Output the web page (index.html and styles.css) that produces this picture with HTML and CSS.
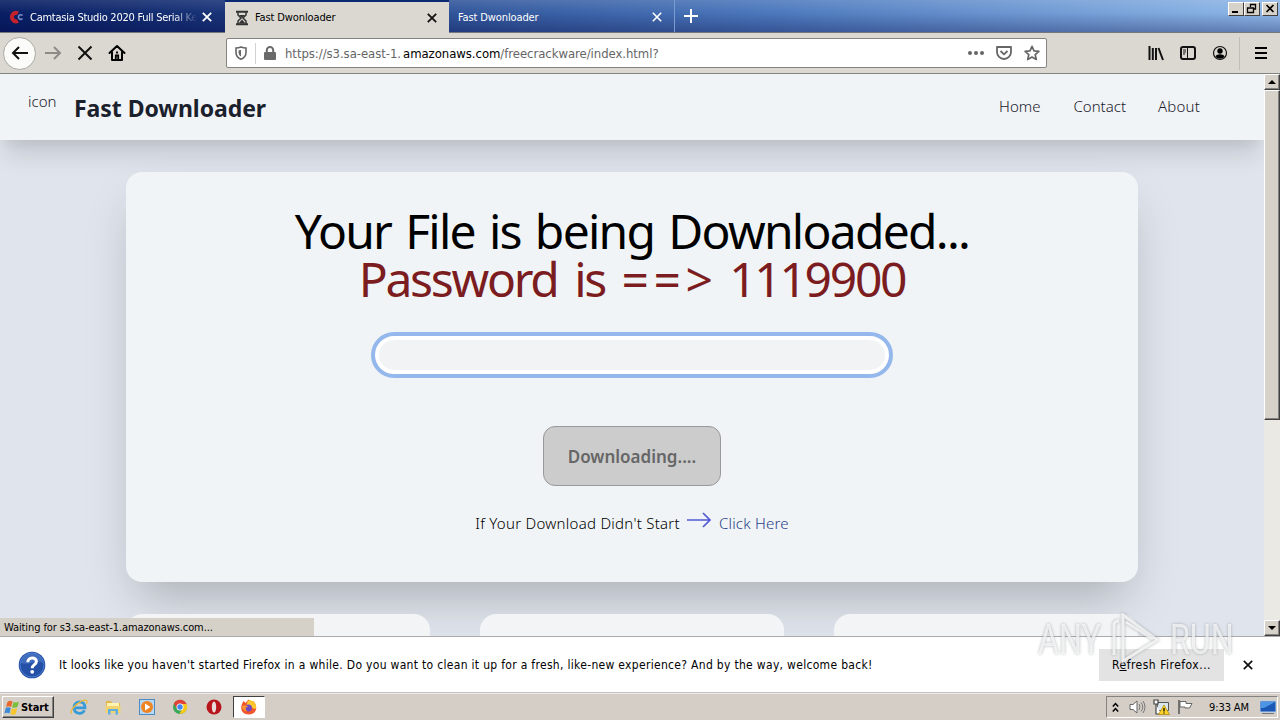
FILE: index.html
```
<!DOCTYPE html>
<html lang="en">
<head>
  <meta charset="UTF-8">
  <meta name="viewport" content="width=device-width, initial-scale=1.0">
  <title>Fast Dwonloader</title>
  <link rel="stylesheet" href="styles.css">
</head>
<body>

<div class="tabs">
  <div class="tab tab-first">
    <svg width="16" height="16" viewBox="0 0 16 16"><path d="M9 4.2A4.3 4.3 0 1 0 9 12" fill="none" stroke="#c4222b" stroke-width="4"/><path d="M13.5 6.6a2.3 2.3 0 1 0 0 3" fill="none" stroke="#7288c8" stroke-width="1.6"/></svg>
    <span class="tab-title fade">Camtasia Studio 2020 Full Serial Ke</span>
    <svg class="x" width="10" height="10" viewBox="0 0 10 10"><path d="M.8.8l8.4 8.4M9.2.8L.8 9.2" stroke="#fff" stroke-width="1.8"/></svg>
  </div>
  <div class="tab active">
    <svg width="16" height="16" viewBox="0 0 16 16"><path d="M2 1.8h12M2 14.2h12" stroke="#333" stroke-width="2"/><path d="M4 2v3l3 3-3 3v3M12 2v3L9 8l3 3v3" fill="none" stroke="#333" stroke-width="1.5"/><path d="M5 5h6L8 8zM4.5 13.5L8 9.5l3.5 4z" fill="#333"/></svg>
    <span class="tab-title">Fast Dwonloader</span>
    <svg class="x" width="10" height="10" viewBox="0 0 10 10"><path d="M.8.8l8.4 8.4M9.2.8L.8 9.2" stroke="#111" stroke-width="1.8"/></svg>
  </div>
  <div class="tab tab-last">
    <span class="tab-title">Fast Dwonloader</span>
    <svg class="x" width="10" height="10" viewBox="0 0 10 10"><path d="M.8.8l8.4 8.4M9.2.8L.8 9.2" stroke="#fff" stroke-width="1.6"/></svg>
  </div>
  <svg class="plus" width="14" height="14" viewBox="0 0 14 14"><path d="M7 0v14M0 7h14" stroke="#fff" stroke-width="2"/></svg>
  <div class="window-buttons">
    <span class="wb"><svg width="14" height="11" viewBox="0 0 14 11"><path d="M3 9h6" stroke="#000" stroke-width="2"/></svg></span>
    <span class="wb"><svg width="14" height="11" viewBox="0 0 14 11"><path d="M5.5 4V1.5h5v4.5H9M5 1.5h6M2.5 5h6v4.5h-6zM2 5h7" fill="none" stroke="#000" stroke-width="1.3"/></svg></span>
    <span class="wb close"><svg width="14" height="11" viewBox="0 0 14 11"><path d="M3.5 2l7 7M10.5 2l-7 7" stroke="#000" stroke-width="1.7"/></svg></span>
  </div>
</div>

<div class="toolbar">
  <div class="nav-buttons">
    <span class="back"><svg width="18" height="18" viewBox="0 0 18 18"><path d="M17 9H2M8 3L2 9l6 6" fill="none" stroke="#111" stroke-width="2"/></svg></span>
    <svg width="18" height="18" viewBox="0 0 18 18"><path d="M1 9h15M10 3l6 6-6 6" fill="none" stroke="#8d8b87" stroke-width="2"/></svg>
    <svg width="16" height="16" viewBox="0 0 16 16"><path d="M1.5 1.5l13 13M14.5 1.5l-13 13" stroke="#111" stroke-width="2"/></svg>
    <svg width="18" height="18" viewBox="0 0 18 18"><path d="M1.5 9L9 2l7.5 7M4 8v8h10V8" fill="none" stroke="#000" stroke-width="2" stroke-linejoin="round" stroke-linecap="round"/><path d="M7.8 16v-4.5h2.4V16M8 8.5h2" fill="none" stroke="#000" stroke-width="1.8"/></svg>
  </div>
  <div class="urlbar">
    <svg width="14" height="14" viewBox="0 0 14 14"><path d="M7 1c-2 .8-3.5 1-5 1v4.5C2 9.5 4 12 7 13.2c3-1.2 5-3.7 5-6.700V2c-1.500 0-3-.2-5-1z" fill="none" stroke="#666" stroke-width="1.6"/><path d="M7 4v6.500C5.200 9.500 4.600 8 4.600 6.500V4.300z" fill="#666"/></svg>
    <span class="url-divider"></span>
    <svg class="lock" width="14" height="14" viewBox="0 0 14 14"><path d="M3.800 7V4.200a3.200 3.200 0 0 1 6.400 0V7" fill="none" stroke="#6a6a6a" stroke-width="2"/><rect x="1" y="6" width="12" height="8" rx="1" fill="#6a6a6a"/></svg>
    <span class="url">https://s3.sa-east-1.<b>amazonaws.com</b>/freecrackware/index.html?</span>
    <svg width="16" height="16" viewBox="0 0 16 16" fill="#666"><circle cx="2" cy="8" r="2"/><circle cx="8" cy="8" r="2"/><circle cx="14" cy="8" r="2"/></svg>
    <svg width="16" height="16" viewBox="0 0 16 16"><path d="M1 2h14v5a7 7 0 0 1-14 0z" fill="none" stroke="#666" stroke-width="1.8" stroke-linejoin="round"/><path d="M4.500 6L8 9.300 11.500 6" fill="none" stroke="#666" stroke-width="1.8"/></svg>
    <svg width="16" height="16" viewBox="0 0 16 16"><path d="M8 1.300l2 4.500 4.900.5-3.700 3.300 1.100 4.900L8 12l-4.300 2.500 1.100-4.900L1.100 6.300 6 5.800z" fill="none" stroke="#666" stroke-width="1.7" stroke-linejoin="round"/></svg>
  </div>
  <div class="tools">
    <svg width="16" height="16" viewBox="0 0 16 16"><path d="M1.500 1v14M4.800 3v12M8 3v12M10.500 3l4.500 12" stroke="#111" stroke-width="2"/></svg>
    <svg width="16" height="16" viewBox="0 0 16 16"><rect x="1" y="2" width="14" height="12" rx="2" fill="none" stroke="#111" stroke-width="2"/><path d="M7.500 2v12M3 5h3M3 7h3M3 9h2" stroke="#111"/></svg>
    <svg width="16" height="16" viewBox="0 0 16 16"><circle cx="8" cy="8" r="6.500" fill="none" stroke="#111" stroke-width="1.2"/><circle cx="8" cy="6" r="2.700"/><path d="M3.500 11.500c1-3 8-3 9 0-2 3-7 3-9 0z"/></svg>
    <span class="divider"></span>
    <svg width="12" height="14" viewBox="0 0 12 14"><path d="M0 2h12M0 7h12M0 12h12" stroke="#000" stroke-width="2"/></svg>
  </div>
</div>

<div class="viewport">
  <div class="page">
    <header>
      <span class="logo">icon</span>
      <h2>Fast Downloader</h2>
      <nav>
        <a class="home">Home</a>
        <a class="contact">Contact</a>
        <a class="about">About</a>
      </nav>
    </header>
    <main class="card">
      <h1>Your File is being Downloaded...</h1>
      <h1 class="password">Password is <span class="arrow">==&gt;</span> 1119900</h1>
      <div class="progress"></div>
      <button disabled>Downloading....</button>
      <p><span class="start-text">If Your Download Didn't Start</span>
        <svg width="25" height="16" viewBox="0 0 25 16"><path d="M0 8h23M16 1l7 7-7 7" fill="none" stroke="#5059d8" stroke-width="1.7"/></svg>
        <a class="click">Click Here</a></p>
    </main>
    <div class="boxes">
      <div></div>
      <div></div>
      <div></div>
    </div>
    <div class="status">Waiting for s3.sa-east-1.amazonaws.com...</div>
  </div>
  <div class="scrollbar">
    <span class="sb-btn"><svg width="8" height="4"><path d="M4 0l4 4H0z"/></svg></span>
    <span class="thumb"></span>
    <span class="sb-btn bottom"><svg width="8" height="4"><path d="M0 0h8L4 4z"/></svg></span>
  </div>
</div>

<div class="notice">
  <svg width="28" height="28" viewBox="0 0 28 28"><circle cx="14" cy="14" r="13.300" fill="#2450a8"/><circle cx="14" cy="14" r="12" fill="none" stroke="#4d7bd0"/><path d="M3 12a11 10 0 0 1 22 0c-5-4-15 3-22 0z" fill="#5c88d4" opacity=".5"/><path d="M9.800 11.200c0-5.600 8.600-5.600 8.600-.7 0 3.200-4.200 3.200-4.200 6.700" fill="none" stroke="#fff" stroke-width="3"/><circle cx="14.200" cy="20.800" r="1.900" fill="#fff"/></svg>
  <span class="message">It looks like you haven't started Firefox in a while. Do you want to clean it up for a fresh, like-new experience? And by the way, welcome back!</span>
  <span class="refresh"><span>R<u>e</u>fresh Firefox...</span></span>
  <svg width="10" height="10" viewBox="0 0 10 10"><path d="M.8.8l8.400 8.400M9.200.8L.8 9.200" stroke="#111" stroke-width="1.7"/></svg>
</div>

<div class="taskbar">
  <div class="start">
    <svg width="18" height="17" viewBox="0 0 17 17"><path d="M4 3q2.500-2 5-.5L7.600 8Q5 6.500 2.500 8z" fill="#e8682c"/><path d="M10 3q2.500 1 5.500-.5L14 8q-3 1.500-5.400.2z" fill="#7bbf3c"/><path d="M2.200 9q2.500-1.500 5 0L6 14.500q-2.500-1.700-5 0z" fill="#3c8ad8"/><path d="M8.300 9.300q2.500 1.400 5.400 0L12.300 15q-3 1.400-5.400 0z" fill="#f5c52c"/></svg>
    <b>Start</b>
  </div>
  <div class="apps">
    <svg width="18" height="18" viewBox="0 0 18 18"><path d="M4.500 9.800H15c.3-8-11-8-11 0 0 6.500 8 7 10.500 2.500" fill="none" stroke="#359bd9" stroke-width="2.7"/><path d="M1.500 15.500C-1 11 13 0 16.500 2.500c1 .8.500 2-.3 3.200" fill="none" stroke="#e9b93b" stroke-width="1.3"/></svg>
    <svg width="18" height="18" viewBox="0 0 18 18"><path d="M2 3h5l1 2h8v9H2z" fill="#e0b64c"/><path d="M3 5h12v5H3z" fill="#fff3b0"/><path d="M1.500 8h15v7h-15z" fill="#f1d36f"/><path d="M4 16.500V11h10v5.500h-2.500V13h-5v3.500z" fill="#5eaee0"/></svg>
    <svg width="18" height="18" viewBox="0 0 18 18"><rect x="1.500" y="1.500" width="15" height="15" fill="#b8d7f2" stroke="#4b8ac5"/><circle cx="9" cy="9" r="6" fill="#ee8422"/><path d="M7 5.500L12.500 9 7 12.500z" fill="#fff"/></svg>
    <svg width="18" height="18" viewBox="0 0 18 18"><circle cx="9" cy="9" r="7" fill="#3aa757"/><path d="M2.900 5.500A7 7 0 0 1 15.500 6H9L6 11z" fill="#e04335"/><path d="M15.500 6A7 7 0 0 1 8.500 16l3.500-7-3-3z" fill="#f8c91c"/><circle cx="9" cy="9" r="3.500" fill="#fff"/><circle cx="9" cy="9" r="2.700" fill="#4285f4"/></svg>
    <svg width="18" height="18" viewBox="0 0 18 18"><circle cx="9" cy="9" r="7.500" fill="#b8141c"/><ellipse cx="9" cy="9" rx="2.200" ry="5.600" fill="#e8ddd8"/></svg>
    <span class="current"><svg width="18" height="18" viewBox="0 0 18 18"><path d="M3.500 3l2 2 3-3.500 3 2.500 1.500-1C18 7 17.500 16.500 9 16.500S-.5 9 3.500 3z" fill="#f0562a"/><path d="M9 2c4 0 8 4 7 8-2 3-4-2-7-2s-3-3 0-6z" fill="#ffc72e"/><circle cx="8.500" cy="10" r="3.400" fill="#6e4bc4"/><path d="M2 8c3-2 6 0 6 1-3 0-3 2-1 4-3 0-5-2-5-5z" fill="#fa9431"/></svg></span>
  </div>
  <div class="tray">
    <svg width="7" height="11" viewBox="0 0 7 11"><path d="M.8 4.500l2.700-3 2.700 3M.8 9.500l2.700-3 2.700 3" fill="none" stroke="#000" stroke-width="1.5"/></svg>
    <svg class="speaker" width="17" height="16" viewBox="0 0 17 16"><path d="M1 5.500h3L8 2v12l-4-3.500H1z" fill="#fff" stroke="#666"/><path d="M10 5q2 3 0 6M12 3.500q3.500 4.500 0 9M14 2q4 6 0 12" fill="none" stroke="#777"/></svg>
    <svg class="network" width="17" height="16" viewBox="0 0 17 16"><path d="M4.500 3.500h11v8h-11z" fill="#d9e6ee" stroke="#555"/><path d="M1 1h4v4H1zM3 5v10h5" fill="#fff" stroke="#444" stroke-width="1.2"/><path d="M11 6l5.500 9.500h-11z" fill="#ffd42a" stroke="#a98500" stroke-width=".7"/><path d="M11 9v3.500M11 13.500v1" stroke="#000" stroke-width="1.3"/></svg>
    <svg class="flag" width="16" height="16" viewBox="0 0 16 16"><path d="M2 1v14" stroke="#555" stroke-width="1.5"/><path d="M3 2.500h6v2h6L12.500 9H8V8H3z" fill="#fff" stroke="#666"/></svg>
    <span class="time">9:33 AM</span>
    <svg class="desktop" width="16" height="16" viewBox="0 0 16 16"><rect x="0" y="2" width="16" height="11" fill="#1b57b4" stroke="#b5d0ec"/><path d="M1 3h14L4 9H1z" fill="#4c94e4"/><path d="M2 14.500h12" stroke="#777"/></svg>
  </div>
</div>

<div class="watermark">
  <span>ANY</span>
  <svg width="52" height="52" viewBox="0 0 52 52"><path d="M4 42V12q0-4 5-4M13 2v46l34-21z" fill="none" stroke="#fff" stroke-width="3"/><path d="M16 9l27 17" stroke="#fff" stroke-width="3"/></svg>
  <span>RUN</span>
</div>

</body>
</html>
```
FILE: styles.css
```
* {
  box-sizing: border-box;
}
body {
  margin: 0;
  width: 1280px;
  height: 720px;
  overflow: hidden;
  display: flex;
  flex-direction: column;
  position: relative;
  font-family: "DejaVu Sans Condensed", "DejaVu Sans", sans-serif;
  font-size: 11px;
  color: #000;
}
svg {
  display: block;
  flex: none;
}

/* tab strip */
.tabs {
  height: 33px;
  flex: none;
  display: flex;
  background: linear-gradient(rgba(255,255,255,.12), rgba(255,255,255,0) 40%, rgba(0,0,60,.3)), linear-gradient(90deg, #0a246a, #4c78bc 60%, #8fb8e8);
  border-bottom: 1px solid #74777c;
}
.tab {
  width: 225px;
  height: 32px;
  display: flex;
  align-items: center;
  color: #fff;
  padding: 2px 13px 0 9px;
}
.tab-title {
  flex: 1;
  margin-left: 5px;
  white-space: nowrap;
  overflow: hidden;
  letter-spacing: -0.12px;
}
.tab-first {
  background: rgba(0,0,60,.12);
}
.tab-first .tab-title {
  margin-right: 5px;
  letter-spacing: -0.25px;
}
.fade {
  -webkit-mask-image: linear-gradient(90deg, #000 86%, transparent);
  mask-image: linear-gradient(90deg, #000 86%, transparent);
}
.active {
  width: 224px;
  height: 33px;
  border-top: 2px solid #0b2a74;
  background: #dbd8d1;
  color: #000;
  padding-top: 0;
  padding-right: 12px;
}
.tab-last {
  width: 226px;
  border-right: 1px solid #7c9bd0;
  padding-left: 4px;
  padding-right: 12px;
}
.plus {
  margin: 9px 0 0 9px;
}
.window-buttons {
  margin-left: auto;
  display: flex;
  padding: 2px 2px 0 0;
}
.wb {
  width: 16px;
  height: 14px;
  background: #d6d2c9;
  border: 1px solid;
  border-color: #fff #404040 #404040 #fff;
}
.close {
  margin-left: 2px;
}

/* toolbar */
.toolbar {
  height: 41px;
  flex: none;
  background: #dbd8d1;
  border-bottom: 1px solid #85837f;
  display: flex;
  align-items: center;
}
.nav-buttons {
  width: 226px;
  display: flex;
  align-items: center;
  gap: 15px;
  padding-left: 3px;
}
.back {
  width: 33px;
  height: 33px;
  margin-right: -7px;
  border-radius: 50%;
  border: 1px solid #aaa8a2;
  background: #fbfbf9;
  display: flex;
  align-items: center;
  justify-content: center;
}
.urlbar {
  width: 821px;
  height: 30px;
  background: #fff;
  border: 1px solid #85837f;
  border-radius: 2px;
  display: flex;
  align-items: center;
  padding: 0 6px 0 7px;
  gap: 12px;
}
.url-divider {
  width: 1px;
  height: 21px;
  margin: 0 -5px 0 -5px;
  background: #d2d2d2;
}
.lock {
  margin-right: -4px;
}
.url {
  flex: 1;
  color: #666;
  font-size: 13px;
  letter-spacing: -0.05px;
}
.url b {
  font-weight: normal;
  color: #000;
  margin-left: 2px;
}
.tools {
  margin-left: auto;
  display: flex;
  align-items: center;
  gap: 16px;
  padding-right: 13px;
}
.divider {
  width: 1px;
  height: 33px;
  background: #c1beb7;
  margin: 0 -1px 0 -5px;
}

/* web page */
.viewport {
  height: 562px;
  flex: none;
  display: flex;
}
.page {
  width: 1264px;
  position: relative;
  overflow: hidden;
  background: #e0e5ed;
  font-family: "Noto Sans", sans-serif;
  font-weight: 300;
}
header {
  height: 66px;
  background: #f1f4f6;
  box-shadow: 0 20px 25px -5px rgba(0,0,0,.12), 0 10px 10px -5px rgba(0,0,0,.05);
  display: flex;
  color: #1a202c;
}
.logo {
  font-size: 15px;
  margin: 16px 0 0 28px;
  line-height: 22px;
  width: 46px;
}
h2 {
  margin: 18px 0 0;
  font-size: 23px;
  line-height: 32px;
  font-weight: 700;
  letter-spacing: -0.05px;
}
nav {
  margin: 21px 64px 0 auto;
  display: flex;
  font-size: 15px;
  line-height: 22px;
}
.home {
  margin-right: 33px;
}
.contact {
  margin-right: 32px;
}
.about {
  letter-spacing: 0.2px;
}
.card {
  width: 1012px;
  height: 410px;
  margin: 32px auto;
  padding-top: 35px;
  background: #f1f4f6;
  border-radius: 16px;
  box-shadow: 0 25px 50px -12px rgba(0,0,0,.25);
  display: flex;
  flex-direction: column;
  align-items: center;
}
h1 {
  margin: 0;
  font-size: 48px;
  line-height: 48px;
  font-weight: 400;
  letter-spacing: -1.75px;
  word-spacing: 3.3px;
  white-space: nowrap;
}
.password {
  color: #7b1c20;
  letter-spacing: -2.3px;
  word-spacing: 6.5px;
}
.arrow {
  letter-spacing: 4.5px;
  margin-right: -5px;
}
.progress {
  width: 522px;
  height: 46px;
  margin-top: 29px;
  border: 4px solid #95b8ec;
  border-radius: 23px;
  background: #f2f3f4;
  box-shadow: inset 0 0 0 4px #fff;
}
button {
  width: 178px;
  height: 60px;
  margin-top: 48px;
  border: 1px solid #999;
  border-radius: 12px;
  background: #ccc;
  color: #666;
  font: 600 17px "Noto Sans", sans-serif;
  white-space: nowrap;
}
p {
  margin: 25px 0 0;
  display: flex;
  font-size: 15px;
  line-height: 24px;
}
p svg {
  margin: 1px 7px 0;
}
.start-text {
  letter-spacing: 0.27px;
}
.click {
  color: #2b3f88;
  letter-spacing: 0.2px;
}
.boxes {
  width: 1012px;
  margin: 0 auto;
  display: grid;
  grid-template-columns: repeat(3, 304px);
  gap: 50px;
}
.boxes div {
  height: 60px;
  border-radius: 16px;
  background: #f2f4f5;
}
.status {
  position: absolute;
  left: 0;
  bottom: 0;
  width: 314px;
  height: 18px;
  padding-left: 4px;
  background: #d5d1c8;
  font: 400 11px/20px "DejaVu Sans Condensed", "DejaVu Sans", sans-serif;
  letter-spacing: -0.1px;
}
.scrollbar {
  width: 16px;
  display: flex;
  flex-direction: column;
  background: #ebe9e4;
}
.sb-btn {
  height: 16px;
  display: flex;
  align-items: center;
  justify-content: center;
}
.sb-btn, .thumb {
  background: #d6d2c9;
  border: 1px solid;
  border-color: #fff #404040 #404040 #fff;
  box-shadow: inset -1px -1px #85837f;
}
.thumb {
  height: 330px;
}
.bottom {
  margin-top: auto;
}

/* notification bar */
.notice {
  height: 57px;
  flex: none;
  display: flex;
  align-items: center;
  background: #fff;
  border-top: 1px solid #aaa;
  border-bottom: 1px solid #c5c2bd;
  padding: 0 27px 0 18px;
  font-size: 12px;
}
.message {
  margin-left: 13px;
  white-space: nowrap;
  letter-spacing: 0.31px;
}
.refresh {
  width: 125px;
  height: 32px;
  margin: 0 19px 0 auto;
  background: #e3e3e3;
  display: flex;
  align-items: center;
  justify-content: center;
  letter-spacing: 0.5px;
}

/* taskbar */
.taskbar {
  height: 27px;
  flex: none;
  display: flex;
  align-items: center;
  background: #d5cec6;
  border-top: 1px solid #eee;
}
.start {
  width: 52px;
  height: 22px;
  margin-left: 2px;
  display: flex;
  align-items: center;
  border: 1px solid;
  border-color: #fff #404040 #404040 #fff;
  box-shadow: inset -1px -1px #85837f;
  letter-spacing: -0.1px;
}
.apps {
  display: flex;
  align-items: center;
  gap: 15.8px;
  margin-left: 16px;
}
.current {
  width: 32px;
  height: 22px;
  margin-left: -6px;
  background: #fff;
  border: 1px solid;
  border-color: #404040 #fff #fff #404040;
  display: flex;
  align-items: center;
  justify-content: center;
}
.tray {
  width: 172px;
  height: 22px;
  margin: 0 2px 0 auto;
  border: 1px solid;
  border-color: #85837f #fff #fff #85837f;
  display: flex;
  align-items: center;
  padding: 0 1px 0 5px;
}
.speaker {
  margin-left: 10px;
}
.network {
  margin-left: 7px;
}
.flag {
  margin-left: 7px;
}
.time {
  margin-left: 16px;
  white-space: nowrap;
  letter-spacing: -0.1px;
}
.desktop {
  margin-left: auto;
}

/* overlay logo */
.watermark {
  position: absolute;
  left: 1038px;
  top: 609px;
  display: flex;
  align-items: center;
  gap: 8px;
  color: rgba(255,255,255,.7);
  font: 400 43px/60px Roboto, sans-serif;
  filter: drop-shadow(0 0 1.5px rgba(120,125,130,.8));
}
.watermark span {
  width: 64px;
  transform: scaleX(.75);
  transform-origin: left;
}
.watermark svg {
  opacity: .75;
}
```
